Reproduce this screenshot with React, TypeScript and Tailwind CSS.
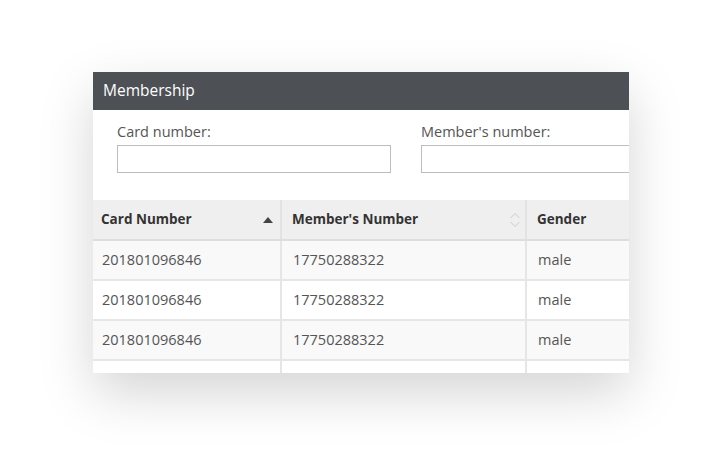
import React from "react";

const rows = [
  { card: "201801096846", member: "17750288322", gender: "male", bg: "bg-[#f9f9f9]" },
  { card: "201801096846", member: "17750288322", gender: "male", bg: "bg-white" },
  { card: "201801096846", member: "17750288322", gender: "male", bg: "bg-[#f9f9f9]" },
  { card: "", member: "", gender: "", bg: "bg-white" },
];

export default function App() {
  return (
    <div
      className="w-[725px] h-[450px] bg-white pl-[93px] pt-[72px]"
      style={{ fontFamily: '"Open Sans", "Noto Sans", sans-serif' }}
    >
      <div className="w-[536px] h-[301px] bg-white overflow-hidden shadow-[0_20px_50px_rgba(0,0,0,0.17)]">
        <div className="h-[38px] bg-[#4d5054] flex items-center pl-[10px] text-[15.5px] text-white">
          Membership
        </div>
        <div className="flex gap-[30px] pl-[24px] pt-[12px] h-[90px] w-[800px]">
          <div className="flex flex-col">
            <label className="text-[14.5px] text-[#555] leading-[19px]">Card number:</label>
            <div className="mt-[4px] w-[274px] h-[28px] border border-[#bdbdbd]" />
          </div>
          <div className="flex flex-col">
            <label className="text-[14.5px] text-[#555] leading-[19px]">Member's number:</label>
            <div className="mt-[4px] w-[274px] h-[28px] border border-[#bdbdbd]" />
          </div>
        </div>
        <div className="w-[700px]">
          <div className="flex h-[41px] bg-[#efefef] border-b-2 border-[#dedede] text-[13.5px] font-bold text-[#333]">
            <div className="w-[189px] border-r-2 border-[#e2e2e2] flex items-center justify-between pl-[8px] pr-[7px]">
              <span>Card Number</span>
              <svg width="10" height="6" viewBox="0 0 10 6">
                <path d="M0 6 L5 0 L10 6 Z" fill="#444" />
              </svg>
            </div>
            <div className="w-[245px] border-r-2 border-[#e2e2e2] flex items-center justify-between pl-[10px] pr-[4px]">
              <span>Member's Number</span>
              <svg width="12" height="16" viewBox="0 0 12 16">
                <path d="M1.5 6 L6 1.5 L10.5 6" fill="none" stroke="#ccc" strokeWidth="1" />
                <path d="M1.5 10 L6 14.5 L10.5 10" fill="none" stroke="#ccc" strokeWidth="1" />
              </svg>
            </div>
            <div className="flex-1 flex items-center pl-[10px]">Gender</div>
          </div>
          {rows.map((r, i) => (
            <div
              key={i}
              className={`flex h-[40px] ${r.bg} border-b-2 border-[#e6e6e6] text-[14.5px] text-[#555]`}
            >
              <div className="w-[189px] border-r-2 border-[#e6e6e6] flex items-center pl-[9px]">{r.card}</div>
              <div className="w-[245px] border-r-2 border-[#e6e6e6] flex items-center pl-[11px]">{r.member}</div>
              <div className="flex-1 flex items-center pl-[11px]">{r.gender}</div>
            </div>
          ))}
        </div>
      </div>
    </div>
  );
}
